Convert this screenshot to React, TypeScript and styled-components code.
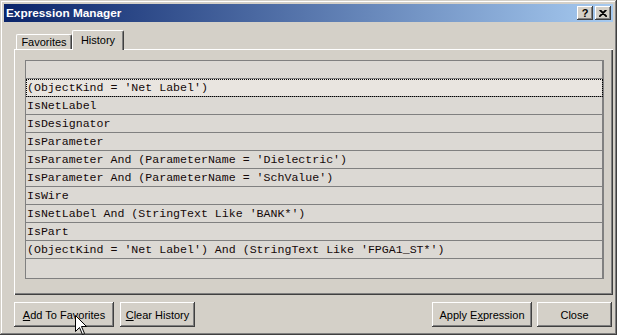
import React from 'react'
import styled, { createGlobalStyle } from 'styled-components'

const face = '#d4d0c8'
const shadow = '#808080'
const darkShadow = '#404040'
const uiFont = `"Liberation Sans", Arial, sans-serif`

const GlobalStyle = createGlobalStyle`
  html, body {
    margin: 0;
    padding: 0;
    background: ${face};
  }
  body {
    font-family: ${uiFont};
  }
`

const Window = styled.div`
  position: relative;
  box-sizing: border-box;
  width: 617px;
  height: 335px;
  padding: 4px;
  display: flex;
  flex-direction: column;
  background: ${face};
  box-shadow: inset -1px -1px ${darkShadow}, inset 1px 1px ${face},
    inset -2px -2px ${shadow}, inset 2px 2px #fff;
  overflow: hidden;
`

const TitleBar = styled.div`
  height: 18px;
  flex: none;
  display: flex;
  align-items: center;
  justify-content: space-between;
  padding: 0 2px;
  background: linear-gradient(to right, #0a246a, #a6caf0);
`

const Title = styled.span`
  color: #fff;
  font-weight: bold;
  font-size: 11.8px;
`

const CaptionButtons = styled.div`
  display: flex;
  gap: 2px;
`

const CaptionButton = styled.div`
  box-sizing: border-box;
  width: 16px;
  height: 14px;
  display: flex;
  align-items: center;
  justify-content: center;
  background: ${face};
  box-shadow: inset -1px -1px ${darkShadow}, inset 1px 1px #fff,
    inset -2px -2px ${shadow};
  font-weight: bold;
  font-size: 11px;
  color: #000;
  line-height: 14px;
`

const TabRow = styled.div`
  display: flex;
  align-items: flex-end;
  height: 19px;
  margin: 8px 0 0 12px;
  flex: none;
`

const Tab = styled.div<{ active?: boolean }>`
  position: relative;
  z-index: ${(p) => (p.active ? 1 : 0)};
  box-sizing: border-box;
  height: ${(p) => (p.active ? 20 : 15)}px;
  width: ${(p) => (p.active ? 52 : 56)}px;
  margin-bottom: ${(p) => (p.active ? -1 : 0)}px;
  padding-top: ${(p) => (p.active ? 3 : 1)}px;
  text-align: center;
  font-size: 11px;
  color: #000;
  background: ${face};
  border-top: 1px solid #fff;
  border-left: 1px solid #fff;
  border-right: 1px solid ${darkShadow};
  border-radius: 2px 2px 0 0;
  box-shadow: inset -1px 0 ${shadow};
`

const Panel = styled.div`
  box-sizing: border-box;
  height: 246px;
  margin-left: 10px;
  flex: none;
  display: flex;
  padding: 11px 9px 16px 11px;
  box-shadow: inset 1px 1px #fff, inset -1px -1px ${darkShadow},
    inset -2px -2px ${shadow};
`

const Grid = styled.div`
  flex: 1;
  display: flex;
  flex-direction: column;
  border: 1px solid ${shadow};
  background: #dcd9d4;
`

const Row = styled.div<{ selected?: boolean }>`
  box-sizing: border-box;
  height: 18px;
  flex: none;
  border-bottom: 1px solid ${shadow};
  border-right: 1px solid ${shadow};
  background: ${(p) => (p.selected ? '#e9e5e0' : 'transparent')};
  font-family: "Liberation Mono", "Courier New", monospace;
  font-size: 11.6px;
  line-height: 17px;
  color: #140808;
  white-space: pre;
  padding-left: 1px;
  outline: ${(p) => (p.selected ? '1px dotted #000' : 'none')};
  outline-offset: -1px;
`

const Filler = styled.div`
  flex: 1;
  border-right: 1px solid ${shadow};
`

const ButtonRow = styled.div`
  display: flex;
  gap: 6px;
  margin: 7px 1px 0 10px;
  flex: none;
`

const Spacer = styled.div`
  flex: 1;
`

const Button = styled.div<{ wide?: boolean }>`
  box-sizing: border-box;
  width: ${(p) => (p.wide ? 100 : 75)}px;
  height: 25px;
  display: flex;
  align-items: center;
  justify-content: center;
  background: ${face};
  box-shadow: inset -1px -1px ${darkShadow}, inset 1px 1px #fff,
    inset -2px -2px ${shadow};
  font-size: 11px;
  color: #000;
`

const RightButtons = styled.div`
  display: flex;
  gap: 5px;
`

const Key = styled.span`
  text-decoration: underline;
`

const Cursor = styled.svg`
  position: absolute;
  left: 75px;
  top: 315px;
`

const history = [
  "(ObjectKind = 'Net Label')",
  'IsNetLabel',
  'IsDesignator',
  'IsParameter',
  "IsParameter And (ParameterName = 'Dielectric')",
  "IsParameter And (ParameterName = 'SchValue')",
  'IsWire',
  "IsNetLabel And (StringText Like 'BANK*')",
  'IsPart',
  "(ObjectKind = 'Net Label') And (StringText Like 'FPGA1_ST*')"
]

export default function App() {
  return (
    <>
      <GlobalStyle />
      <Window>
        <TitleBar>
          <Title>Expression Manager</Title>
          <CaptionButtons>
            <CaptionButton>?</CaptionButton>
            <CaptionButton>
              <svg width='8' height='7' viewBox='0 0 8 7'>
                <path
                  d='M0.5 0 L7.5 7 M1.5 0 L8 6.5 M7.5 0 L0.5 7 M6.5 0 L0 6.5'
                  stroke='#000'
                  strokeWidth='1.1'
                  fill='none'
                />
              </svg>
            </CaptionButton>
          </CaptionButtons>
        </TitleBar>

        <TabRow>
          <Tab>Favorites</Tab>
          <Tab active>History</Tab>
        </TabRow>

        <Panel>
          <Grid>
            <Row />
            {history.map((item, i) => (
              <Row key={i} selected={i === 0}>
                {item}
              </Row>
            ))}
            <Filler />
          </Grid>
        </Panel>

        <ButtonRow>
          <Button wide>
            <span>
              <Key>A</Key>dd To Favorites
            </span>
          </Button>
          <Button>
            <span>
              <Key>C</Key>lear History
            </span>
          </Button>
          <Spacer />
          <RightButtons>
            <Button wide>
              <span>
                Apply E<Key>x</Key>pression
              </span>
            </Button>
            <Button>Close</Button>
          </RightButtons>
        </ButtonRow>

        <Cursor width='13' height='21' viewBox='0 0 13 21'>
          <path
            d='M0.5 0.5 L0.5 16.5 L4.5 12.5 L7.5 19.5 L9.5 18.5 L6.5 11.5 L11.5 11.5 Z'
            fill='#fff'
            stroke='#000'
            strokeWidth='1'
          />
        </Cursor>
      </Window>
    </>
  )
}
